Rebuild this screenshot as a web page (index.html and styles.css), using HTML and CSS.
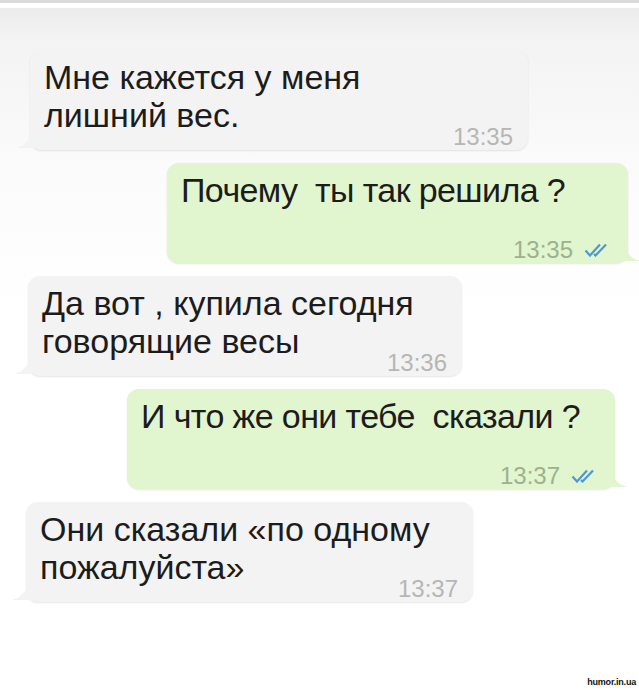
FILE: index.html
```html
<!DOCTYPE html>
<html>
<head>
  <title>Чат</title>
  <link rel="stylesheet" href="styles.css">
</head>
<body>

<div class="top"></div>

<div class="chat">
  <div class="bubble in m1">
    <div class="text">Мне кажется у меня<br>лишний вес.</div>
    <div class="meta"><span class="time">13:35</span></div>
  </div>

  <div class="bubble out m2">
    <div class="text">Почему&nbsp; ты так решила ?</div>
    <div class="meta">
      <span class="time">13:35</span>
      <svg class="ticks" viewBox="0 0 29 14"><path d="M1.5 7.5 L6 12.5 L16 1.5"/><path d="M10 11 L11.5 12.5 L22 1.5"/></svg>
    </div>
  </div>

  <div class="bubble in m3">
    <div class="text">Да вот , купила сегодня<br>говорящие весы</div>
    <div class="meta"><span class="time">13:36</span></div>
  </div>

  <div class="bubble out m4">
    <div class="text">И что же они тебе&nbsp; сказали ?</div>
    <div class="meta">
      <span class="time">13:37</span>
      <svg class="ticks" viewBox="0 0 29 14"><path d="M1.5 7.5 L6 12.5 L16 1.5"/><path d="M10 11 L11.5 12.5 L22 1.5"/></svg>
    </div>
  </div>

  <div class="bubble in m5">
    <div class="text">Они сказали «по одному<br>пожалуйста»</div>
    <div class="meta"><span class="time">13:37</span></div>
  </div>
</div>

<div class="mark">humor.in.ua</div>

</body>
</html>
```

FILE: styles.css
```css
* {
  box-sizing: border-box;
}
body {
  margin: 0;
  height: 690px;
  display: flex;
  flex-direction: column;
  font-family: "Liberation Sans", Arial, sans-serif;
  background: #fff;
  color: #1c1c1c;
}
.top {
  height: 3px;
  background: #dadada;
  border-bottom: 5px solid #fff;
  box-sizing: content-box;
}
.chat {
  display: flex;
  flex-direction: column;
  gap: 13px;
  padding: 42px 11px 0 28px;
  background: linear-gradient(#ececec 0, #f3f3f3 30px, #fafafa 140px, #fff 300px);
}
.bubble {
  position: relative;
  display: flex;
  flex-direction: column;
  padding: 8px 15px 3px 14px;
  border-radius: 12px;
  box-shadow: 0 1px 2px rgba(0, 0, 0, 0.1);
}
.bubble::before {
  content: "";
  position: absolute;
  bottom: 2px;
  width: 18px;
  height: 14px;
}
.in {
  align-self: flex-start;
  background: #f3f3f3;
}
.in::before {
  left: -14px;
  background: #f3f3f3;
  clip-path: polygon(100% 0, 100% 100%, 0 100%, 40% 80%);
}
.out {
  align-self: flex-end;
  background: #e1f5cf;
}
.out::before {
  right: -12px;
  background: #e1f5cf;
  clip-path: polygon(0 0, 0 100%, 100% 100%, 60% 80%);
}
.text {
  min-height: 76px;
  font-size: 34px;
  line-height: 38px;
  white-space: nowrap;
}
.out .text {
  letter-spacing: -0.6px;
}
.meta {
  display: flex;
  justify-content: flex-end;
  align-items: center;
  gap: 11px;
  margin-top: -7px;
  height: 20px;
}
.time {
  font-size: 24px;
  line-height: 20px;
  color: #b6b6b6;
}
.out .time {
  color: #9db18f;
}
.ticks {
  width: 29px;
  height: 14px;
  fill: none;
  stroke: #4f97d6;
  stroke-width: 2.2;
}
.m1 { width: 498px; margin-left: 2px; }
.m2 { width: 461px; }
.m3 { width: 434px; }
.m4 { width: 488px; margin-right: 13px; }
.m5 { width: 447px; margin-left: -2px; }
.mark {
  margin-top: auto;
  padding: 0 3px 3px 0;
  text-align: right;
  font-size: 9px;
  font-weight: bold;
  letter-spacing: -0.2px;
  color: #111;
}
```
